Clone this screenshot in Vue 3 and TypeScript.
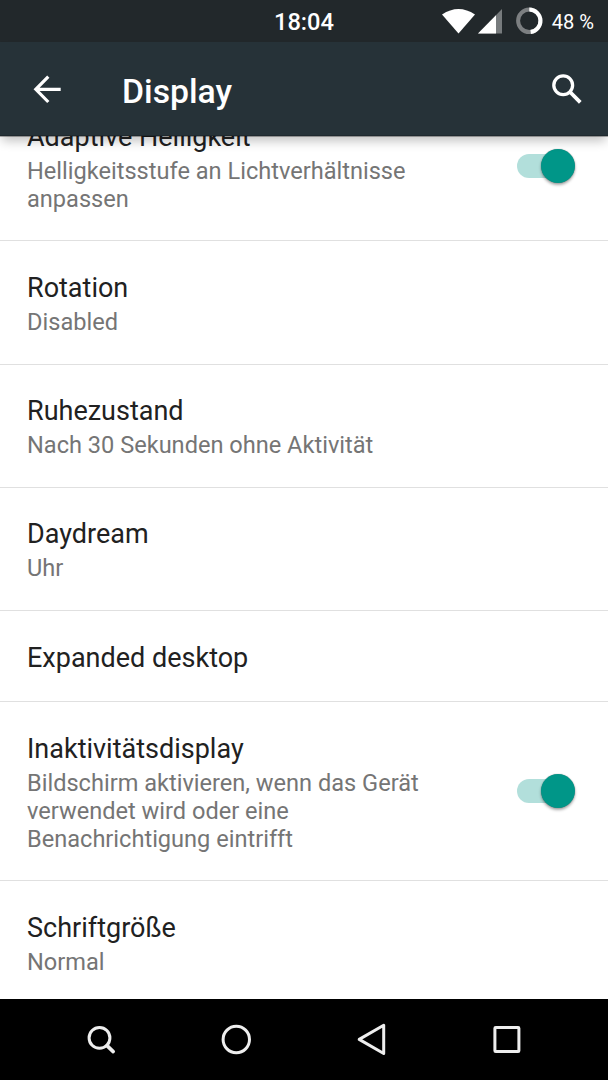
<script setup lang="ts">
interface Setting {
  title: string
  lines: string[]
  height: number
  on?: boolean
}

const settings: Setting[] = [
  { title: 'Adaptive Helligkeit', lines: ['Helligkeitsstufe an Lichtverhältnisse', 'anpassen'], height: 150, on: true },
  { title: 'Rotation', lines: ['Disabled'], height: 124 },
  { title: 'Ruhezustand', lines: ['Nach 30 Sekunden ohne Aktivität'], height: 123 },
  { title: 'Daydream', lines: ['Uhr'], height: 123 },
  { title: 'Expanded desktop', lines: [], height: 91 },
  {
    title: 'Inaktivitätsdisplay',
    lines: ['Bildschirm aktivieren, wenn das Gerät', 'verwendet wird oder eine', 'Benachrichtigung eintrifft'],
    height: 179,
    on: true,
  },
  { title: 'Schriftgröße', lines: ['Normal'], height: 124 },
]
</script>

<template>
  <div class="screen">
    <div class="status">
      <span class="clock">18:04</span>
      <div class="indicators">
        <svg class="signals" width="104" height="42" viewBox="0 0 104 42">
          <path d="M0 14.5Q16.5 3.5 33 14.5L16.5 33.5Z" fill="#fff" />
          <path d="M60 9V33.5H36Z" fill="#777b7d" />
          <path d="M54 15.2V33.5H36Z" fill="#fff" />
          <circle cx="87.3" cy="20.8" r="11.2" fill="none" stroke="#7c7f81" stroke-width="4" />
          <path d="M87.3 9.6A11.2 11.2 0 0 1 88.7 31.9" fill="none" stroke="#fff" stroke-width="4" />
        </svg>
        <span class="battery">48 %</span>
      </div>
    </div>

    <header class="toolbar">
      <svg class="back" width="30" height="30" viewBox="0 0 30 30" fill="none" stroke="#fff" stroke-width="3.2">
        <path d="M15.3 2.6L2.8 15.3L15.3 28M3.1 15.3H27.7" />
      </svg>
      <h1>Display</h1>
      <svg class="find" width="32" height="32" viewBox="0 0 32 32" fill="none" stroke="#fff" stroke-width="3.3">
        <circle cx="12.2" cy="12.2" r="9.4" />
        <path d="M19 19L29.3 29.3" stroke-width="3.8" />
      </svg>
    </header>

    <main class="list">
      <section v-for="item in settings" :key="item.title" class="row" :style="{ height: item.height + 'px' }">
        <div class="text">
          <h2>{{ item.title }}</h2>
          <p v-for="line in item.lines" :key="line">{{ line }}</p>
        </div>
        <div v-if="item.on" class="switch"><span class="thumb"></span></div>
      </section>
    </main>

    <nav class="navbar">
      <svg viewBox="0 0 40 40"><circle cx="18.5" cy="18.9" r="10.4" /><path d="M26 26.6L32.2 32.6" stroke-linecap="round" stroke-width="3.6" /></svg>
      <svg viewBox="0 0 40 40"><circle cx="20.3" cy="20.5" r="13.2" /></svg>
      <svg viewBox="0 0 40 40"><path d="M31.7 6.3V34.5L7.2 20.4Z" stroke-linejoin="round" /></svg>
      <svg viewBox="0 0 40 40"><rect x="7.9" y="8.5" width="24" height="24" rx="0.8" /></svg>
    </nav>
  </div>
</template>

<style>
body {
  margin: 0;
}
</style>

<style scoped>
.screen {
  display: flex;
  flex-direction: column;
  width: 608px;
  height: 1080px;
  overflow: hidden;
  background: #fff;
  font-family: Roboto, sans-serif;
}
.status {
  position: relative;
  flex: none;
  display: flex;
  justify-content: center;
  height: 42px;
  background: #22282b;
  color: #fff;
  line-height: 44px;
}
.clock {
  font-size: 23.64px;
  font-weight: 500;
}
.indicators {
  position: absolute;
  top: 0;
  right: 14px;
  display: flex;
  gap: 6px;
}
.battery {
  font-size: 20.1px;
}
.toolbar {
  position: relative;
  z-index: 1;
  flex: none;
  display: flex;
  align-items: center;
  box-sizing: border-box;
  height: 94px;
  padding: 0 25px 0 33px;
  background: #263238;
  border-bottom: 1px solid #1f292e;
  box-shadow: 0 1px 0 rgba(0, 0, 0, 0.3), 0 7px 10px -2px rgba(0, 0, 0, 0.24);
}
.toolbar svg {
  margin-top: 1px;
}
h1 {
  flex: 1;
  margin: 6px 0 0 59px;
  color: #fff;
  font-size: 33.78px;
  font-weight: 500;
  line-height: 40px;
}
.list {
  flex: 1;
  min-height: 0;
  overflow: hidden;
}
.row {
  display: flex;
  align-items: center;
  justify-content: space-between;
  box-sizing: border-box;
  padding: 0 33px 0 27px;
  border-bottom: 1px solid #e0e0e0;
}
.row:first-child {
  margin-top: -45px;
}
.text {
  padding-top: 3px;
}
.row:nth-child(3) .text,
.row:nth-child(4) .text {
  padding-top: 2px;
}
h2 {
  margin: 0;
  color: #212121;
  font-size: 27px;
  font-weight: 400;
  line-height: 32px;
}
p {
  margin: 0;
  color: #757575;
  font-size: 23.58px;
  line-height: 28px;
  white-space: nowrap;
}
h2 + p {
  margin-top: 4px;
}
.switch {
  display: flex;
  align-items: center;
  justify-content: flex-end;
  width: 58px;
  height: 24px;
  border-radius: 12px;
  background: linear-gradient(90deg, #b2dfdb 41px, transparent 41px);
}
.thumb {
  width: 34px;
  height: 34px;
  border-radius: 50%;
  background: #009688;
  box-shadow: 0 2px 3px rgba(0, 0, 0, 0.35), 0 0 1px rgba(0, 0, 0, 0.4);
}
.navbar {
  flex: none;
  display: flex;
  align-items: flex-start;
  justify-content: space-between;
  box-sizing: border-box;
  height: 81px;
  padding: 20px 81px 0;
  background: #000;
}
.navbar svg {
  width: 40px;
  height: 40px;
  fill: none;
  stroke: #eee;
  stroke-width: 3;
}
</style>
